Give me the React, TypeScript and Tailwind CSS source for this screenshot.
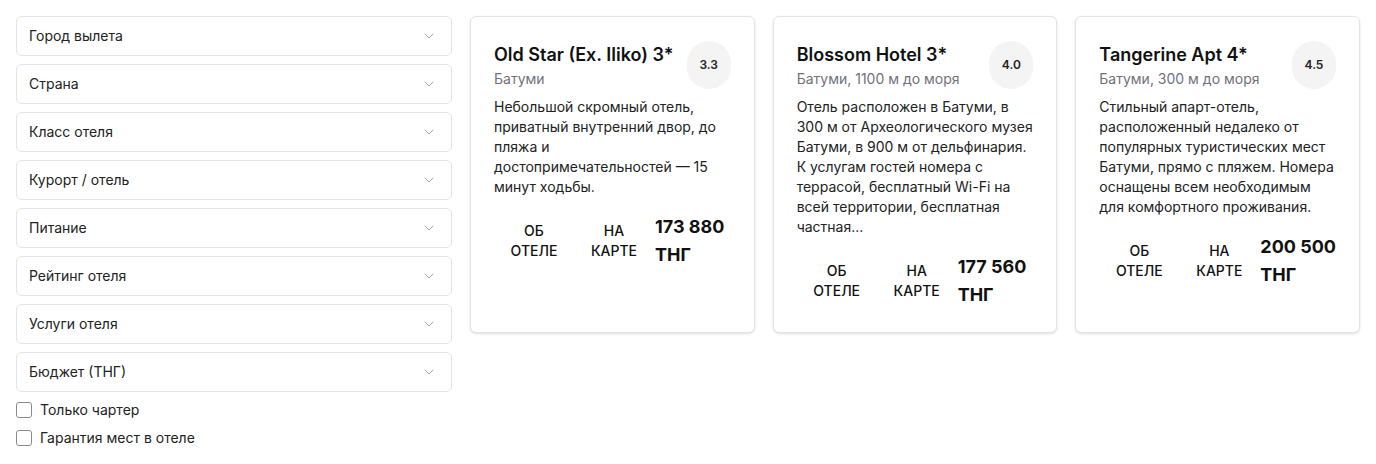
import React from "react";
import { ChevronDown } from "lucide-react";

const filters = [
  "Город вылета",
  "Страна",
  "Класс отеля",
  "Курорт / отель",
  "Питание",
  "Рейтинг отеля",
  "Услуги отеля",
  "Бюджет (ТНГ)",
];

const hotels = [
  {
    name: "Old Star (Ex. Iliko) 3*",
    place: "Батуми",
    rating: "3.3",
    text: "Небольшой скромный отель, приватный внутренний двор, до пляжа и достопримечательностей — 15 минут ходьбы.",
    price: "173 880 ТНГ",
  },
  {
    name: "Blossom Hotel 3*",
    place: "Батуми, 1100 м до моря",
    rating: "4.0",
    text: "Отель расположен в Батуми, в 300 м от Археологического музея Батуми, в 900 м от дельфинария. К услугам гостей номера с террасой, бесплатный Wi-Fi на всей территории, бесплатная частная...",
    price: "177 560 ТНГ",
  },
  {
    name: "Tangerine Apt 4*",
    place: "Батуми, 300 м до моря",
    rating: "4.5",
    text: "Стильный апарт-отель, расположенный недалеко от популярных туристических мест Батуми, прямо с пляжем. Номера оснащены всем необходимым для комфортного проживания.",
    price: "200 500 ТНГ",
  },
];

function FilterSelect({ label }: { label: string }) {
  return (
    <div className="flex h-10 items-center justify-between rounded-md border border-[#e4e4e7] bg-white pl-3 pr-3.5 text-sm text-[#222]">
      <span>{label}</span>
      <ChevronDown className="h-4 w-4 text-[#a1a1aa]" strokeWidth={1.5} />
    </div>
  );
}

function Check({ label }: { label: string }) {
  return (
    <label className="flex items-center gap-2 text-sm leading-5 text-[#222]">
      <span className="h-4 w-4 rounded-[3px] border border-[#8a8a8a] bg-white" />
      {label}
    </label>
  );
}

function HotelCard({ hotel }: { hotel: (typeof hotels)[number] }) {
  return (
    <div className="rounded-md border border-[#e4e4e7] bg-white px-[23px] pb-[23px] pt-6 shadow-sm">
      <div className="flex items-start gap-2">
        <div className="flex-1">
          <div className="text-lg font-semibold leading-7 text-[#111]">{hotel.name}</div>
          <div className="text-sm leading-5 text-[#71717a]">{hotel.place}</div>
        </div>
        <div className="flex h-12 w-11 shrink-0 items-center justify-center rounded-full bg-[#f4f4f5] text-xs font-semibold text-[#222]">
          {hotel.rating}
        </div>
      </div>
      <p className="mt-2 text-sm leading-5 text-[#222]">{hotel.text}</p>
      <div className="mt-4 flex items-start">
        <button className="w-20 shrink-0 px-4 py-2 text-center text-sm font-medium leading-5 text-[#111]">
          ОБ ОТЕЛЕ
        </button>
        <button className="w-20 shrink-0 px-4 py-2 text-center text-sm font-medium leading-5 text-[#111]">
          НА КАРТЕ
        </button>
        <div className="flex-1 pl-px text-lg font-bold leading-7 text-[#111]">{hotel.price}</div>
      </div>
    </div>
  );
}

export default function App() {
  return (
    <div className="min-h-screen bg-white p-4 font-['Inter',sans-serif]">
      <div className="flex items-start gap-[18px]">
        <div className="flex w-[436px] shrink-0 flex-col gap-2">
          {filters.map((f) => (
            <FilterSelect key={f} label={f} />
          ))}
          <Check label="Только чартер" />
          <Check label="Гарантия мест в отеле" />
        </div>
        <div className="grid flex-1 grid-cols-3 gap-[18px]">
          {hotels.map((h) => (
            <HotelCard key={h.name} hotel={h} />
          ))}
        </div>
      </div>
    </div>
  );
}
